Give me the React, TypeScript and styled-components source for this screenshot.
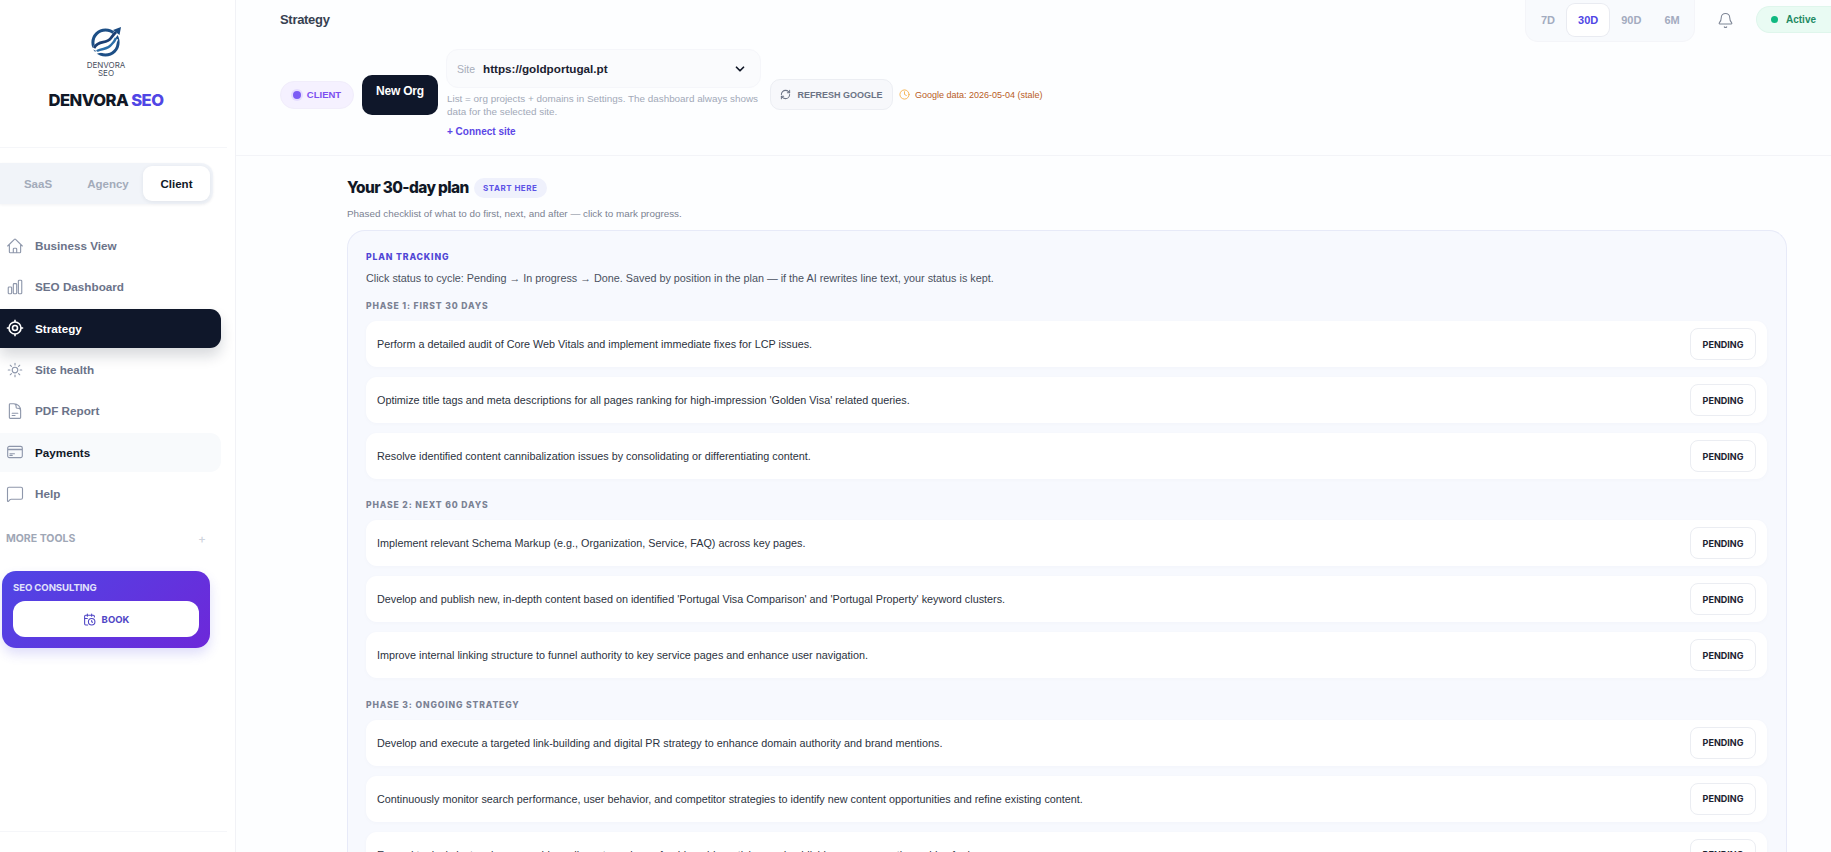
import styled, { createGlobalStyle } from "styled-components";
import { Bell, CalendarClock, ChevronDown, Clock, MessageSquare, RefreshCw } from "lucide-react";
import {
  HiOutlineChartBar,
  HiOutlineCreditCard,
  HiOutlineDocumentText,
  HiOutlineHome,
  HiOutlineSun,
} from "react-icons/hi2";
import type { ReactNode } from "react";

const GlobalStyle = createGlobalStyle`
  html, body {
    margin: 0;
    height: 100%;
    overflow: hidden;
    background: #fdfeff;
    font-family: "Liberation Sans", Arial, sans-serif;
  }
  * { box-sizing: border-box; }
`;

const heading = `"Inter", "Liberation Sans", sans-serif`;

const Page = styled.div`
  display: flex;
  width: 1831px;
  height: 852px;
  overflow: hidden;
`;

const Sidebar = styled.aside`
  width: 236px;
  flex-shrink: 0;
  height: 852px;
  display: flex;
  flex-direction: column;
  background: #fff;
  border-right: 1px solid #f1f2f6;
`;

const Brand = styled.div`
  height: 148px;
  margin-right: 8px;
  padding: 26px 15px 0 0;
  display: flex;
  flex-direction: column;
  align-items: center;
  border-bottom: 1px solid #f5f6f9;
`;

const LogoCaption = styled.div`
  margin-top: 3px;
  font: 400 8px/8px ${heading};
  color: #4a5060;
  text-align: center;
`;

const BrandName = styled.div`
  margin-top: 12px;
  font: 800 16.6px/22px ${heading};
  letter-spacing: -0.55px;
  color: #111827;

  span {
    color: #5046e5;
  }
`;

const ModeSwitch = styled.div`
  margin-top: 15px;
  width: 213px;
  height: 41px;
  padding: 3px;
  display: flex;
  align-items: stretch;
  background: #f1f4f9;
  border-radius: 0 12px 12px 0;
  box-shadow: 0 1px 3px rgba(30, 40, 70, 0.06);
`;

const ModeTab = styled.div<{ $active?: boolean }>`
  width: ${(p) => (p.$active ? "67px" : "70px")};
  display: flex;
  align-items: center;
  justify-content: center;
  border-radius: 9px;
  font: 700 11.5px "Liberation Sans", sans-serif;
  color: ${(p) => (p.$active ? "#111827" : "#a3abba")};
  background: ${(p) => (p.$active ? "#fff" : "transparent")};
  box-shadow: ${(p) => (p.$active ? "0 1px 4px rgba(30,40,70,.08)" : "none")};
`;

const Nav = styled.nav`
  margin-top: 22px;
  display: flex;
  flex-direction: column;
  gap: 2.35px;
`;

const NavItem = styled.div<{ $active?: boolean; $hover?: boolean }>`
  width: 221px;
  height: 39px;
  padding-left: 6px;
  display: flex;
  align-items: center;
  gap: 11px;
  border-radius: 0 11px 11px 0;
  font: 700 11.7px "Liberation Sans", sans-serif;
  color: ${(p) => (p.$active ? "#fff" : p.$hover ? "#111827" : "#6b7389")};
  background: ${(p) => (p.$active ? "#0f172a" : p.$hover ? "#f8fafc" : "transparent")};
  box-shadow: ${(p) => (p.$active ? "0 8px 14px rgba(15,23,42,.16)" : "none")};

  svg {
    flex-shrink: 0;
    color: ${(p) => (p.$active ? "#fff" : "#8e97ab")};
  }
`;

const MoreTools = styled.div`
  margin-top: 19px;
  padding: 0 29px 0 6px;
  display: flex;
  align-items: center;
  justify-content: space-between;
  font: 700 10.5px/14px ${heading};
  color: #9fa7b6;

  span:last-child {
    color: #cfd4dd;
    font-size: 12px;
    font-weight: 500;
  }
`;

const ConsultCard = styled.div`
  margin: 25px 0 0 2px;
  width: 208px;
  height: 77px;
  padding: 11px 11px 11px;
  border-radius: 14px;
  background: linear-gradient(135deg, #4f46e5, #6d28d9);
  box-shadow: 0 6px 12px rgba(79, 70, 229, 0.18);
`;

const ConsultLabel = styled.div`
  font: 700 9.6px/12px ${heading};
  letter-spacing: -0.1px;
  color: #e0e2fb;
`;

const BookButton = styled.div`
  margin-top: 7px;
  height: 36px;
  display: flex;
  align-items: center;
  justify-content: center;
  gap: 6px;
  background: #fff;
  border-radius: 12px;
  font: 700 9.5px ${heading};
  color: #4f46c5;
`;

const SideFooter = styled.div`
  margin-top: auto;
  margin-right: 8px;
  height: 21px;
  border-top: 1px solid #f5f6f9;
`;

const Main = styled.main`
  flex: 1;
  min-width: 0;
  display: flex;
  flex-direction: column;
`;

const Header = styled.header`
  height: 156px;
  flex-shrink: 0;
  padding-left: 44px;
  border-bottom: 1px solid #f3f4f8;
`;

const TopRow = styled.div`
  display: flex;
  align-items: flex-start;
`;

const PageTitle = styled.h1`
  margin: 12px 0 0;
  font: 700 13px/16px "Liberation Sans", sans-serif;
  letter-spacing: -0.3px;
  color: #374151;
`;

const RangeBox = styled.div`
  margin-left: auto;
  width: 170px;
  height: 42px;
  padding: 4px 4px 5px;
  display: flex;
  gap: 1px;
  background: #f8fafd;
  border: 1px solid #f4f5f9;
  border-top: none;
  border-radius: 0 0 13px 13px;
`;

const RangeTab = styled.div<{ $active?: boolean }>`
  padding: 0 11px;
  display: flex;
  align-items: center;
  justify-content: center;
  border-radius: 8px;
  font: 700 11px "Liberation Sans", sans-serif;
  color: ${(p) => (p.$active ? "#5046e5" : "#a3abbf")};
  background: ${(p) => (p.$active ? "#fff" : "transparent")};
  box-shadow: ${(p) => (p.$active ? "0 0 0 1px #e9ebf1" : "none")};
`;

const BellWrap = styled.div`
  margin: 12px 22px 0 22px;
  display: flex;
  color: #7d8595;
`;

const ActivePill = styled.div`
  margin-top: 6px;
  width: 75px;
  height: 27px;
  padding-left: 14px;
  display: flex;
  align-items: center;
  gap: 8px;
  background: #e9fbf3;
  border: 1px solid #dff6ec;
  border-right: none;
  border-radius: 14px 0 0 14px;
  font: 700 10px "Liberation Sans", sans-serif;
  color: #1f8a62;

  i {
    width: 7px;
    height: 7px;
    border-radius: 50%;
    background: #10b981;
  }
`;

const ToolRow = styled.div`
  margin-top: 7px;
  display: flex;
  align-items: center;
`;

const ClientPill = styled.div`
  width: 74px;
  height: 28px;
  display: flex;
  align-items: center;
  justify-content: center;
  gap: 6px;
  border-radius: 14px;
  background: #f5f1ff;
  border: 1px solid #f1edfb;
  font: 700 9.5px "Liberation Sans", sans-serif;
  color: #7c4ff0;

  i {
    width: 8px;
    height: 8px;
    border-radius: 50%;
    background: #7c5cf5;
    box-shadow: 0 0 0 2px #e5dcff;
  }
`;

const NewOrg = styled.button`
  margin-left: 8px;
  width: 76px;
  height: 40px;
  padding: 0 0 7px;
  border: none;
  border-radius: 10px;
  background: #0f172a;
  color: #fff;
  font: 700 12px "Liberation Sans", sans-serif;
  letter-spacing: -0.2px;
`;

const SiteColumn = styled.div`
  margin-left: 8px;
  width: 315px;
  padding-bottom: 2px;
  display: flex;
  flex-direction: column;
`;

const SiteSelect = styled.div`
  height: 39px;
  padding: 0 13px 0 10px;
  display: flex;
  align-items: center;
  background: #fafbfd;
  border: 1px solid #f5f6fa;
  border-radius: 12px;

  svg {
    margin-left: auto;
    color: #111827;
  }
`;

const SiteLabel = styled.span`
  width: 26px;
  font: 400 10.5px "Liberation Sans", sans-serif;
  color: #a7adba;
`;

const SiteValue = styled.span`
  font: 700 11.7px "Liberation Sans", sans-serif;
  color: #1a2130;
`;

const SiteHelp = styled.p`
  margin: 4px 0 0 1px;
  font: 400 9.9px/13.4px "Liberation Sans", sans-serif;
  color: #a2a9b8;
`;

const ConnectLink = styled.a`
  display: block;
  margin: 6px 0 0 1px;
  font: 700 10px/14px "Liberation Sans", sans-serif;
  color: #5b46e6;
`;

const RefreshButton = styled.div`
  margin-left: 9px;
  width: 123px;
  height: 31px;
  display: flex;
  align-items: center;
  justify-content: center;
  gap: 6px;
  background: #f7f8fb;
  border: 1px solid #eceef3;
  border-radius: 10px;
  font: 700 9px "Liberation Sans", sans-serif;
  color: #6b7385;
`;

const StaleNote = styled.div`
  margin-left: 6px;
  display: flex;
  align-items: center;
  gap: 5px;
  font: 400 9px "Liberation Sans", sans-serif;
  color: #b85c26;

  svg {
    color: #f6b14b;
  }
`;

const Content = styled.div`
  flex: 1;
  min-height: 0;
  padding: 22px 44px 0 111px;
  overflow: hidden;
`;

const PlanHead = styled.div`
  display: flex;
  align-items: center;
  gap: 5px;
`;

const PlanTitle = styled.h2`
  margin: 0;
  font: 800 15.4px/20px ${heading};
  letter-spacing: -0.6px;
  color: #111827;
`;

const StartBadge = styled.span`
  width: 73px;
  height: 20px;
  display: flex;
  align-items: center;
  justify-content: center;
  background: #eff1fc;
  border-radius: 10px;
  font: 700 8px ${heading};
  letter-spacing: 0.5px;
  color: #5b52e6;
`;

const PlanDesc = styled.p`
  margin: 9px 0 0;
  font: 400 9.9px/13px "Liberation Sans", sans-serif;
  color: #7b8292;
`;

const PlanCard = styled.section`
  margin-top: 10px;
  padding: 20px 19px 0 18px;
  background: #f7f9fe;
  border: 1px solid #e7eaf8;
  border-bottom: none;
  border-radius: 18px 18px 0 0;
`;

const Eyebrow = styled.div`
  font: 800 8.7px/12px ${heading};
  letter-spacing: 0.85px;
  color: #5046d5;
`;

const PlanNote = styled.p`
  margin: 7px 0 0;
  font: 400 10.8px/16px "Liberation Sans", sans-serif;
  color: #4a5160;
`;

const PhaseTitle = styled.div`
  margin: 14px 0 9px;
  font: 800 8.6px/12px ${heading};
  letter-spacing: 0.85px;
  color: #7b8294;
`;

const TaskList = styled.div`
  display: flex;
  flex-direction: column;
  gap: 10px;
  margin-bottom: 20.4px;
`;

const TaskRow = styled.div`
  height: 46px;
  padding: 0 11px;
  display: flex;
  align-items: center;
  justify-content: space-between;
  background: #fff;
  border-radius: 11px;
  box-shadow: 0 1px 5px rgba(40, 50, 90, 0.025);
`;

const TaskText = styled.span`
  font: 400 10.8px "Liberation Sans", sans-serif;
  color: #2b3240;
`;

const StatusButton = styled.button`
  width: 66px;
  height: 32px;
  background: #fff;
  border: 1px solid #ebedf2;
  border-radius: 8px;
  font: 700 9px ${heading};
  color: #1c2230;
`;

const TargetIcon = () => (
  <svg width="18" height="18" viewBox="0 0 18 18" fill="none" stroke="currentColor" strokeWidth="1.6">
    <circle cx="9" cy="9" r="6" />
    <circle cx="9" cy="9" r="2.5" />
    <path d="M9 0.8v2.2M9 15v2.2M0.8 9h2.2M15 9h2.2" />
  </svg>
);

const Logo = () => (
  <svg width="32" height="32" viewBox="0 0 32 32" fill="none">
    <circle cx="15.5" cy="16.5" r="12.6" stroke="#1d4f86" strokeWidth="3" />
    <path d="M4 24C8 15 17 21 22 13C24 10 25 8 27 6" stroke="#fff" strokeWidth="5" />
    <path d="M4 22C9 13 16 19 21 12C23 9.5 24 8 26 6" stroke="#1b3f73" strokeWidth="2.8" />
    <path d="M5 27C12 24 16 27 22 21C25 18 26 16 27 13" stroke="#fff" strokeWidth="2.5" />
    <path d="M7 25C13 22 17 24 21 19C24 16 25 15 26 12" stroke="#2b6ea8" strokeWidth="2.4" />
    <path d="M31 1L29.5 9L23 4Z" fill="#1b4a80" />
  </svg>
);

const NAV: { label: string; icon: ReactNode; active?: boolean; hover?: boolean }[] = [
  { label: "Business View", icon: <HiOutlineHome size={18} /> },
  { label: "SEO Dashboard", icon: <HiOutlineChartBar size={18} /> },
  { label: "Strategy", icon: <TargetIcon />, active: true },
  { label: "Site health", icon: <HiOutlineSun size={18} /> },
  { label: "PDF Report", icon: <HiOutlineDocumentText size={18} /> },
  { label: "Payments", icon: <HiOutlineCreditCard size={18} />, hover: true },
  { label: "Help", icon: <MessageSquare size={18} strokeWidth={1.5} /> },
];

const PHASES = [
  {
    title: "PHASE 1: FIRST 30 DAYS",
    tasks: [
      "Perform a detailed audit of Core Web Vitals and implement immediate fixes for LCP issues.",
      "Optimize title tags and meta descriptions for all pages ranking for high-impression 'Golden Visa' related queries.",
      "Resolve identified content cannibalization issues by consolidating or differentiating content.",
    ],
  },
  {
    title: "PHASE 2: NEXT 60 DAYS",
    tasks: [
      "Implement relevant Schema Markup (e.g., Organization, Service, FAQ) across key pages.",
      "Develop and publish new, in-depth content based on identified 'Portugal Visa Comparison' and 'Portugal Property' keyword clusters.",
      "Improve internal linking structure to funnel authority to key service pages and enhance user navigation.",
    ],
  },
  {
    title: "PHASE 3: ONGOING STRATEGY",
    tasks: [
      "Develop and execute a targeted link-building and digital PR strategy to enhance domain authority and brand mentions.",
      "Continuously monitor search performance, user behavior, and competitor strategies to identify new content opportunities and refine existing content.",
      "Expand topical clusters by researching adjacent queries, refreshing older articles, and publishing new supporting guides for key pages.",
    ],
  },
];

export default function App() {
  return (
    <Page>
      <GlobalStyle />
      <Sidebar>
        <Brand>
          <Logo />
          <LogoCaption>
            DENVORA
            <br />
            SEO
          </LogoCaption>
          <BrandName>
            DENVORA <span>SEO</span>
          </BrandName>
        </Brand>
        <ModeSwitch>
          <ModeTab>SaaS</ModeTab>
          <ModeTab>Agency</ModeTab>
          <ModeTab $active>Client</ModeTab>
        </ModeSwitch>
        <Nav>
          {NAV.map((item) => (
            <NavItem key={item.label} $active={item.active} $hover={item.hover}>
              {item.icon}
              {item.label}
            </NavItem>
          ))}
        </Nav>
        <MoreTools>
          <span>MORE TOOLS</span>
          <span>+</span>
        </MoreTools>
        <ConsultCard>
          <ConsultLabel>SEO CONSULTING</ConsultLabel>
          <BookButton>
            <CalendarClock size={13} />
            BOOK
          </BookButton>
        </ConsultCard>
        <SideFooter />
      </Sidebar>
      <Main>
        <Header>
          <TopRow>
            <PageTitle>Strategy</PageTitle>
            <RangeBox>
              <RangeTab>7D</RangeTab>
              <RangeTab $active>30D</RangeTab>
              <RangeTab>90D</RangeTab>
              <RangeTab>6M</RangeTab>
            </RangeBox>
            <BellWrap>
              <Bell size={17} strokeWidth={1.5} />
            </BellWrap>
            <ActivePill>
              <i />
              Active
            </ActivePill>
          </TopRow>
          <ToolRow>
            <ClientPill>
              <i />
              CLIENT
            </ClientPill>
            <NewOrg>New Org</NewOrg>
            <SiteColumn>
              <SiteSelect>
                <SiteLabel>Site</SiteLabel>
                <SiteValue>https://goldportugal.pt</SiteValue>
                <ChevronDown size={14} strokeWidth={3} />
              </SiteSelect>
              <SiteHelp>
                List = org projects + domains in Settings. The dashboard always shows data for the selected site.
              </SiteHelp>
              <ConnectLink>+ Connect site</ConnectLink>
            </SiteColumn>
            <RefreshButton>
              <RefreshCw size={11} strokeWidth={2.2} />
              REFRESH GOOGLE
            </RefreshButton>
            <StaleNote>
              <Clock size={11} />
              Google data: 2026-05-04 (stale)
            </StaleNote>
          </ToolRow>
        </Header>
        <Content>
          <PlanHead>
            <PlanTitle>Your 30-day plan</PlanTitle>
            <StartBadge>START HERE</StartBadge>
          </PlanHead>
          <PlanDesc>Phased checklist of what to do first, next, and after — click to mark progress.</PlanDesc>
          <PlanCard>
            <Eyebrow>PLAN TRACKING</Eyebrow>
            <PlanNote>
              Click status to cycle: Pending → In progress → Done. Saved by position in the plan — if the AI rewrites
              line text, your status is kept.
            </PlanNote>
            {PHASES.map((phase) => (
              <div key={phase.title}>
                <PhaseTitle>{phase.title}</PhaseTitle>
                <TaskList>
                  {phase.tasks.map((task) => (
                    <TaskRow key={task}>
                      <TaskText>{task}</TaskText>
                      <StatusButton>PENDING</StatusButton>
                    </TaskRow>
                  ))}
                </TaskList>
              </div>
            ))}
          </PlanCard>
        </Content>
      </Main>
    </Page>
  );
}
